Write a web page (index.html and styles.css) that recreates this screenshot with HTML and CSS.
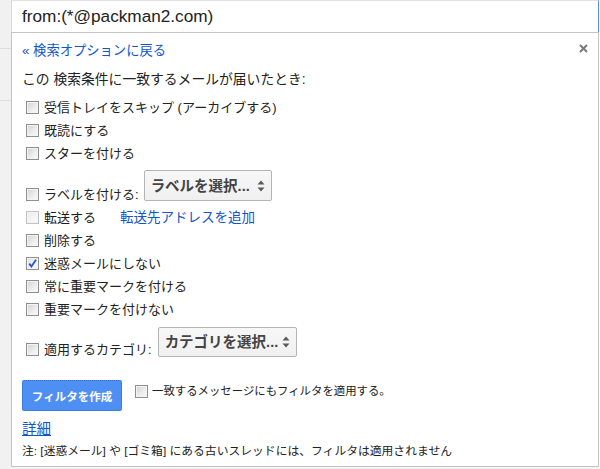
FILE: index.html
```html
<!DOCTYPE html>
<html lang="ja">
<head>
<meta charset="utf-8">
<title>フィルタを作成</title>
<link rel="stylesheet" href="styles.css">
</head>
<body>
<div class="screen">
  <div class="side">
    <div class="side-line first"></div>
    <div class="side-line second"></div>
  </div>
  <div class="main">
    <div class="search">from:(*@packman2.com)</div>
    <div class="panel">
      <div class="top-row">
        <a class="link back" href="#">« 検索オプションに戻る</a>
        <svg class="close" width="9" height="9" viewBox="0 0 9 9"><path d="M1 1 L8 8 M8 1 L1 8" stroke="#7a7a7a" stroke-width="2"/></svg>
      </div>
      <div class="heading">この 検索条件に一致するメールが届いたとき:</div>

      <div class="opt"><span class="cb"></span><span>受信トレイをスキップ (アーカイブする)</span></div>
      <div class="opt"><span class="cb"></span><span>既読にする</span></div>
      <div class="opt"><span class="cb"></span><span>スターを付ける</span></div>

      <div class="opt tall">
        <div class="opt-main"><span class="cb"></span><span>ラベルを付ける:</span></div>
        <div class="select label-select">
          <span>ラベルを選択...</span>
          <svg class="arrows" width="8" height="12" viewBox="0 0 8 12"><path d="M4 0.5 L7.5 4.5 L0.5 4.5 Z M0.5 7.5 L7.5 7.5 L4 11.5 Z" fill="#5a5a5a"/></svg>
        </div>
      </div>

      <div class="opt"><span class="cb light"></span><span class="txt">転送する</span><a class="link fwd" href="#">転送先アドレスを追加</a></div>
      <div class="opt"><span class="cb"></span><span>削除する</span></div>
      <div class="opt"><span class="cb checked"><svg width="11" height="11" viewBox="0 0 11 11"><path d="M2.2 5.6 L4.4 8.4 L9 1.8" fill="none" stroke="#2456d6" stroke-width="1.8"/></svg></span><span>迷惑メールにしない</span></div>
      <div class="opt"><span class="cb"></span><span>常に重要マークを付ける</span></div>
      <div class="opt"><span class="cb"></span><span>重要マークを付けない</span></div>

      <div class="opt tall cat">
        <div class="opt-main"><span class="cb"></span><span>適用するカテゴリ:</span></div>
        <div class="select cat-select">
          <span>カテゴリを選択...</span>
          <svg class="arrows" width="8" height="12" viewBox="0 0 8 12"><path d="M4 0.5 L7.5 4.5 L0.5 4.5 Z M0.5 7.5 L7.5 7.5 L4 11.5 Z" fill="#5a5a5a"/></svg>
        </div>
      </div>

      <div class="action-row">
        <button class="create">フィルタを作成</button>
        <div class="also"><span class="cb"></span><span>一致するメッセージにもフィルタを適用する。</span></div>
      </div>

      <a class="link more" href="#">詳細</a>
      <div class="note">注: [迷惑メール] や [ゴミ箱] にある古いスレッドには、フィルタは適用されません</div>
    </div>
  </div>
</div>
</body>
</html>
```

FILE: styles.css
```css
* { box-sizing: border-box; }

html, body {
  margin: 0;
  padding: 0;
  background: #ffffff;
}

body {
  font-family: "Liberation Sans", "Noto Sans CJK JP", Arial, sans-serif;
  color: #222222;
  font-size: 13px;
}

.screen {
  width: 600px;
  height: 469px;
  display: flex;
  background: #ffffff;
  overflow: hidden;
}

.side {
  width: 11px;
  height: 469px;
  background: #f1f1f1;
  display: flex;
  flex-direction: column;
}

.side-line {
  height: 1px;
  background: #dcdcdc;
}

.side-line.first { margin-top: 48px; }
.side-line.second { margin-top: 51px; }

.main {
  width: 588px;
  display: flex;
  flex-direction: column;
  background: #f4f4f4;
}

.search {
  height: 32px;
  background: #ffffff;
  border-top: 1px solid #e2e2e2;
  border-left: 1px solid #d9d9d9;
  border-right: 1px solid #4d90fe;
  padding-left: 10px;
  font-size: 17.2px;
  line-height: 30px;
  color: #222222;
}

.panel {
  height: 435px;
  background: #ffffff;
  border: 1px solid #c4c4c4;
  padding: 0 10px;
  display: flex;
  flex-direction: column;
}

.link {
  color: #1155cc;
  text-decoration: none;
}

.top-row {
  height: 36px;
  display: flex;
  align-items: center;
  justify-content: space-between;
}

.back { line-height: 20px; font-size: 13.3px; }

.close { margin-right: 0; margin-top: -6px; }

.heading {
  line-height: 22px;
  margin-bottom: 5px;
  font-size: 13.8px;
}

.opt {
  height: 23px;
  display: flex;
  align-items: center;
  line-height: 23px;
}

.txt { color: #1a1a1a; }

.opt-main {
  display: flex;
  align-items: center;
  height: 23px;
}

.cb {
  width: 13px;
  height: 13px;
  margin-left: 4px;
  margin-right: 5px;
  flex: none;
  border: 1px solid #8f8f8f;
  background: linear-gradient(135deg, #d2d2d2 0%, #eeeeee 60%, #fafafa 100%);
  box-shadow: inset 0 0 0 1px #f4f4f4;
  display: flex;
  align-items: center;
  justify-content: center;
}

.cb.light {
  border-color: #c2c2c2;
  background: linear-gradient(135deg, #ececec 0%, #fbfbfb 100%);
}

.cb.checked {
  background: linear-gradient(135deg, #e2e2e2 0%, #fbfbfb 100%);
}

.cb svg { display: block; }

.opt.tall {
  height: 41px;
  align-items: flex-end;
}

.opt.tall.cat { height: 40px; }

.select {
  height: 31px;
  margin-left: 5px;
  margin-bottom: 5px;
  border: 1px solid #b4b4b4;
  border-radius: 2px;
  background: linear-gradient(#f7f7f7, #f0f0f0);
  display: flex;
  align-items: center;
  justify-content: space-between;
  padding: 0 6px 0 6px;
  font-weight: bold;
  font-size: 14.5px;
  color: #444444;
  line-height: 20px;
}

.label-select { width: 128px; }

.cat-select {
  width: 139px;
  height: 30px;
  margin-left: 6px;
  margin-bottom: 4px;
}

.arrows { display: block; flex: none; }

.fwd { margin-left: 24px; font-size: 13.5px; }

.action-row {
  margin-top: 19px;
  display: flex;
  align-items: flex-start;
}

.create {
  width: 100px;
  height: 31px;
  margin: 0;
  padding: 0;
  border: 1px dotted #2f6fd8;
  border-radius: 2px;
  background: #4d8ff2;
  color: #ffffff;
  font-family: "Liberation Sans", "Noto Sans CJK JP", Arial, sans-serif;
  font-size: 11.5px;
  font-weight: bold;
}

.also {
  display: flex;
  align-items: center;
  height: 23px;
  font-size: 11.4px;
  line-height: 23px;
}

.also .cb { margin-left: 13px; margin-right: 4px; }

.more {
  margin-top: 7px;
  line-height: 22px;
  font-size: 14.5px;
  text-decoration: underline;
  align-self: flex-start;
}

.note {
  font-size: 11.8px;
  line-height: 22px;
}
```
